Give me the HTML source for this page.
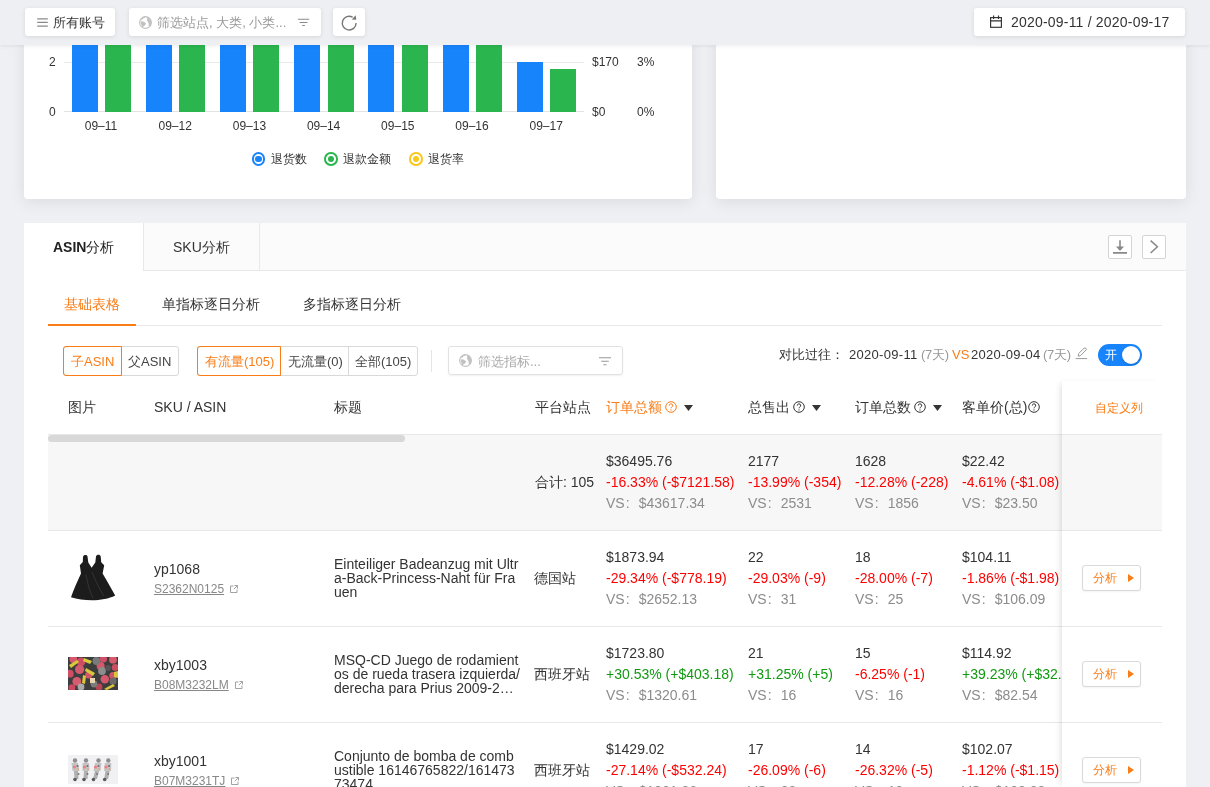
<!DOCTYPE html>
<html><head><meta charset="utf-8"><style>
*{box-sizing:border-box;margin:0;padding:0}
html,body{width:1210px;height:787px;overflow:hidden}
body{background:#eff0f3;font-family:"Liberation Sans",sans-serif;color:#333;position:relative;font-size:14px}
.abs{position:absolute}
.card{position:absolute;background:#fff;border-radius:4px;box-shadow:0 3px 16px rgba(0,0,0,.085)}
.hdr{position:absolute;left:0;top:0;width:1210px;height:45px;background:#eeeff2;box-shadow:0 1px 4px rgba(0,0,0,.08);z-index:10}
.btn{position:absolute;background:#fff;border-radius:3px;box-shadow:0 1px 4px rgba(0,0,0,.1);font-size:13px;color:#333;height:28px;top:8px;white-space:nowrap}
.bar{position:absolute;width:26px}
.b{background:#1784fc}.g{background:#2bb54f}
.t{position:absolute;white-space:nowrap;line-height:16px}
</style></head><body>
<div style="position:absolute;left:0;top:0;width:1210px;height:787px;will-change:transform">
<div class="hdr">
<div class="btn" style="left:25px;width:90px;"><svg class="abs" style="left:0;top:0" width="30" height="29" viewBox="25 8 30 29"><path d="M37.2 18.85H47.8M37.2 22.45H47.8M37.2 26.05H47.8" stroke="#8a8a8a" stroke-width="1.2"/></svg><span class="t" style="left:28px;top:6.6px">所有账号</span></div>
<div class="btn" style="left:129px;width:192px;color:#999"><svg class="abs" style="left:10px;top:8px" width="13" height="13" viewBox="0 0 13 13"><circle cx="6.5" cy="6.5" r="5.9" fill="none" stroke="#c2c2c2" stroke-width="1.1"/><path d="M1.6 5.3C3.3 4.8 5.8 5.6 7.2 7.6 6.5 9.5 4.8 10.6 3.2 11.2L2.6 9.2C1.8 8 1.5 6.5 1.6 5.3Z" fill="#c2c2c2"/><path d="M8.3 1C10.8 1.7 12.3 3.8 12.4 6.5 12.4 8.4 11.6 10 10.6 11L9.6 9.4C10 8 9.2 6.2 8.2 5.1 7.9 3.6 8.3 2.3 8.3 1Z" fill="#c2c2c2"/><path d="M2.4 3.6C3.2 2.2 4.5 1.2 6.2 0.9" fill="none" stroke="#c2c2c2" stroke-width="1.4"/></svg><span class="t" style="left:28px;top:6.6px">筛选站点, 大类, 小类...</span><svg class="abs" style="left:0;top:0" width="192" height="29" viewBox="129 8 192 29"><path d="M297.9 19.2H309.2M299.6 22.5H307.5M302.2 25.5H304.9" stroke="#8a8a8a" stroke-width="1.1"/></svg></div>
<div class="btn" style="left:333px;width:32px;"><svg class="abs" style="left:0;top:0" width="32" height="29" viewBox="333 8 32 29"><path d="M352.6 17.1A6.9 6.9 0 1 0 356.1 23.1" fill="none" stroke="#777" stroke-width="1.4"/><path d="M351.8 19.6L356.3 19.8 355.6 15.2Z" fill="#777"/></svg></div>
<div class="btn" style="left:974px;width:211px;font-size:14px"><svg class="abs" style="left:0;top:0" width="40" height="29" viewBox="974 8 40 29"><rect x="990.6" y="17.6" width="10.8" height="9.7" fill="none" stroke="#333" stroke-width="1.15"/><path d="M990.6 20.8H1001.4M993.6 15.5V18.9M998.5 15.5V18.9" stroke="#333" stroke-width="1.15"/></svg><span class="t" style="left:37px;top:5.6px;letter-spacing:.2px">2020-09-11 / 2020-09-17</span></div>
</div>
<div class="card" style="left:24px;top:20px;width:668px;height:179px"></div>
<div class="card" style="left:716px;top:20px;width:470px;height:179px"></div>
<div class="abs" style="left:64px;top:62px;width:520px;height:1px;background:#e9e9e9"></div>
<div class="abs" style="left:64px;top:111px;width:520px;height:1px;background:#e3e3e3"></div>
<div class="t" style="left:49px;top:54px;font-size:12px;color:#333">2</div>
<div class="t" style="left:49px;top:104px;font-size:12px;color:#333">0</div>
<div class="t" style="left:592px;top:54px;font-size:12px;color:#333">$170</div>
<div class="t" style="left:637px;top:54px;font-size:12px;color:#333">3%</div>
<div class="t" style="left:592px;top:104px;font-size:12px;color:#333">$0</div>
<div class="t" style="left:637px;top:104px;font-size:12px;color:#333">0%</div>
<div class="bar b" style="left:71.5px;top:40px;height:72px"></div>
<div class="bar g" style="left:105.0px;top:40px;height:72px"></div>
<div class="bar b" style="left:145.7px;top:40px;height:72px"></div>
<div class="bar g" style="left:179.2px;top:40px;height:72px"></div>
<div class="bar b" style="left:219.9px;top:40px;height:72px"></div>
<div class="bar g" style="left:253.4px;top:40px;height:72px"></div>
<div class="bar b" style="left:294.1px;top:40px;height:72px"></div>
<div class="bar g" style="left:327.6px;top:40px;height:72px"></div>
<div class="bar b" style="left:368.3px;top:40px;height:72px"></div>
<div class="bar g" style="left:401.8px;top:40px;height:72px"></div>
<div class="bar b" style="left:442.5px;top:40px;height:72px"></div>
<div class="bar g" style="left:476.0px;top:40px;height:72px"></div>
<div class="bar b" style="left:516.7px;top:62px;height:50px"></div>
<div class="bar g" style="left:550.2px;top:69px;height:43px"></div>
<div class="t" style="left:81.0px;width:40px;text-align:center;top:118px;font-size:12px">09–11</div>
<div class="t" style="left:155.2px;width:40px;text-align:center;top:118px;font-size:12px">09–12</div>
<div class="t" style="left:229.4px;width:40px;text-align:center;top:118px;font-size:12px">09–13</div>
<div class="t" style="left:303.6px;width:40px;text-align:center;top:118px;font-size:12px">09–14</div>
<div class="t" style="left:377.8px;width:40px;text-align:center;top:118px;font-size:12px">09–15</div>
<div class="t" style="left:452.0px;width:40px;text-align:center;top:118px;font-size:12px">09–16</div>
<div class="t" style="left:526.2px;width:40px;text-align:center;top:118px;font-size:12px">09–17</div>
<div class="abs" style="left:251.5px;top:152.3px;width:13.6px;height:13.6px;border-radius:50%;border:2px solid #1784fc;background:#fff"><div class="abs" style="left:1.5px;top:1.5px;width:6.6px;height:6.6px;border-radius:50%;background:#1784fc"></div></div><div class="t" style="left:270.5px;top:151px;font-size:12px">退货数</div>
<div class="abs" style="left:324.3px;top:152.3px;width:13.6px;height:13.6px;border-radius:50%;border:2px solid #2bb54f;background:#fff"><div class="abs" style="left:1.5px;top:1.5px;width:6.6px;height:6.6px;border-radius:50%;background:#2bb54f"></div></div><div class="t" style="left:343.3px;top:151px;font-size:12px">退款金额</div>
<div class="abs" style="left:409.4px;top:152.3px;width:13.6px;height:13.6px;border-radius:50%;border:2px solid #f9c81c;background:#fff"><div class="abs" style="left:1.5px;top:1.5px;width:6.6px;height:6.6px;border-radius:50%;background:#f9c81c"></div></div><div class="t" style="left:428.4px;top:151px;font-size:12px">退货率</div>
<div class="abs" style="left:24px;top:223px;width:1162px;height:600px;background:#fff"></div>

<div class="abs" style="left:24px;top:223px;width:1162px;height:48px;background:#fbfbfb;border-bottom:1px solid #e8e8e8"></div>
<div class="abs" style="left:24px;top:223px;width:120px;height:48px;background:#fff;border-right:1px solid #e8e8e8"></div>
<div class="abs" style="left:144px;top:223px;width:116px;height:47px;border-right:1px solid #e8e8e8"></div>
<div class="t" style="left:53px;top:239px;font-size:14px;color:#222"><b>ASIN</b><span style="font-weight:500">分析</span></div>
<div class="t" style="left:173px;top:239px;font-size:14px;color:#333">SKU分析</div>
<div class="abs" style="left:1108px;top:235px;width:24px;height:24px;border:1px solid #d4d4d4;border-radius:2px;background:#fff"></div>
<div class="abs" style="left:1142px;top:235px;width:24px;height:24px;border:1px solid #d4d4d4;border-radius:2px;background:#fff"></div>
<svg class="abs" style="left:1108px;top:235px" width="60" height="24" viewBox="1108 235 60 24"><path d="M1120 240.2V248M1113 252.9H1127" stroke="#888" stroke-width="1.6" fill="none"/><path d="M1116 246.5H1124L1120 251Z" fill="#888"/><path d="M1150.6 240.6L1157.4 246.8 1150.6 253" stroke="#888" stroke-width="1.5" fill="none"/></svg>
<div class="abs" style="left:48px;top:325px;width:1114px;height:1px;background:#e8e8e8"></div>
<div class="abs" style="left:48px;top:324px;width:88px;height:2px;background:#fa7d18"></div>
<div class="t" style="left:64px;top:296px;font-size:14px;color:#fa7d18">基础表格</div>
<div class="t" style="left:162px;top:296px;font-size:14px;color:#333">单指标逐日分析</div>
<div class="t" style="left:303px;top:296px;font-size:14px;color:#333">多指标逐日分析</div>

<div class="abs" style="left:63px;top:346px;width:116px;height:30px;border:1px solid #d9d9d9;border-radius:3px"></div>
<div class="abs" style="left:63px;top:346px;width:59px;height:30px;border:1px solid #fa7d18;border-radius:3px 0 0 3px"></div>
<div class="t" style="left:71px;top:354px;font-size:13px;color:#fa7d18">子ASIN</div>
<div class="t" style="left:128px;top:354px;font-size:13px;color:#444">父ASIN</div>

<div class="abs" style="left:197px;top:346px;width:221px;height:30px;border:1px solid #d9d9d9;border-radius:3px"></div>
<div class="abs" style="left:348px;top:346px;width:1px;height:30px;background:#d9d9d9"></div>
<div class="abs" style="left:197px;top:346px;width:84px;height:30px;border:1px solid #fa7d18;border-radius:3px 0 0 3px"></div>
<div class="t" style="left:205px;top:354px;font-size:13px;color:#fa7d18">有流量(105)</div>
<div class="t" style="left:288px;top:354px;font-size:13px;color:#444">无流量(0)</div>
<div class="t" style="left:355px;top:354px;font-size:13px;color:#444">全部(105)</div>
<div class="abs" style="left:431px;top:350px;width:1px;height:22px;background:#e5e5e5"></div>

<div class="abs" style="left:448px;top:346px;width:175px;height:29px;border:1px solid #e2e2e2;border-radius:3px;box-shadow:0 1px 2px rgba(0,0,0,.06)"></div>
<svg class="abs" style="left:459px;top:354px" width="13" height="13" viewBox="0 0 13 13"><circle cx="6.5" cy="6.5" r="5.9" fill="none" stroke="#c2c2c2" stroke-width="1.1"/><path d="M1.6 5.3C3.3 4.8 5.8 5.6 7.2 7.6 6.5 9.5 4.8 10.6 3.2 11.2L2.6 9.2C1.8 8 1.5 6.5 1.6 5.3Z" fill="#c2c2c2"/><path d="M8.3 1C10.8 1.7 12.3 3.8 12.4 6.5 12.4 8.4 11.6 10 10.6 11L9.6 9.4C10 8 9.2 6.2 8.2 5.1 7.9 3.6 8.3 2.3 8.3 1Z" fill="#c2c2c2"/><path d="M2.4 3.6C3.2 2.2 4.5 1.2 6.2 0.9" fill="none" stroke="#c2c2c2" stroke-width="1.4"/></svg>
<div class="t" style="left:478px;top:354px;font-size:13px;color:#aaa">筛选指标...</div>
<svg class="abs" style="left:599px;top:357px" width="12" height="9" viewBox="0 0 12 9"><path d="M0 .8h12M2.2 4.3h7.6M4.4 7.8h3.2" stroke="#999" stroke-width="1.1"/></svg>

<div class="t" style="left:779px;top:347px;font-size:13px;color:#333">对比过往：</div>
<div class="t" style="left:849px;top:347px;font-size:13px;color:#333;letter-spacing:.3px">2020-09-11</div>
<div class="t" style="left:921px;top:347px;font-size:13px;color:#999;letter-spacing:-.3px">(7天)</div>
<div class="t" style="left:952px;top:347px;font-size:13px;color:#fa7d18">VS</div>
<div class="t" style="left:971px;top:347px;font-size:13px;color:#333;letter-spacing:.3px">2020-09-04</div>
<div class="t" style="left:1043px;top:347px;font-size:13px;color:#999;letter-spacing:-.3px">(7天)</div>
<svg class="abs" style="left:1070px;top:340px" width="20" height="22" viewBox="1070 340 20 22"><path d="M1078.3 356.2L1078.6 353.6 1084 348.3Q1085 347.5 1085.9 348.4 1086.7 349.3 1085.9 350.1L1080.6 355.6Z" fill="none" stroke="#999" stroke-width="1"/><path d="M1075.7 358.6H1087.2" stroke="#999" stroke-width="1"/></svg>
<div class="abs" style="left:1098px;top:344px;width:44px;height:22px;border-radius:11px;background:#1784fc"></div>
<div class="abs" style="left:1122px;top:346px;width:18px;height:18px;border-radius:50%;background:#fff;box-shadow:0 1px 2px rgba(0,0,0,.2)"></div>
<div class="t" style="left:1105px;top:347px;font-size:12px;color:#fff">开</div>

<div class="abs" style="left:48px;top:434px;width:1114px;height:1px;background:#e8e8e8"></div>
<div class="abs" style="left:48px;top:435px;width:1114px;height:95px;background:#f7f7f7"></div>
<div class="abs" style="left:48px;top:530px;width:1114px;height:1px;background:#e8e8e8"></div>
<div class="abs" style="left:48px;top:626px;width:1114px;height:1px;background:#e8e8e8"></div>
<div class="abs" style="left:48px;top:722px;width:1114px;height:1px;background:#e8e8e8"></div>
<div class="abs" style="left:48px;top:435px;width:357px;height:7px;border-radius:3.5px;background:#d8d8d8"></div>

<div class="t" style="left:68px;top:399px">图片</div>
<div class="t" style="left:154px;top:399px">SKU / ASIN</div>
<div class="t" style="left:334px;top:399px">标题</div>
<div class="t" style="left:535px;top:399px">平台站点</div>
<div class="t" style="left:606px;top:399px;color:#fa7d18">订单总额</div>
<div class="t" style="left:748px;top:399px">总售出</div>
<div class="t" style="left:855px;top:399px">订单总数</div>
<div class="t" style="left:962px;top:399px">客单价(总)</div>

<svg class="abs" style="left:665px;top:401px" width="12" height="12" viewBox="0 0 12 12"><circle cx="6" cy="6" r="5.3" fill="none" stroke="#fa7d18" stroke-width="1"/><path d="M4.3 4.6a1.7 1.7 0 1 1 2.4 1.5c-.5.3-.7.6-.7 1.2" fill="none" stroke="#fa7d18" stroke-width="1"/><circle cx="6" cy="8.9" r=".6" fill="#fa7d18"/></svg><svg class="abs" style="left:684px;top:405px" width="9" height="6" viewBox="0 0 9 6"><path d="M0 0h9L4.5 6z" fill="#333"/></svg>
<svg class="abs" style="left:793px;top:401px" width="12" height="12" viewBox="0 0 12 12"><circle cx="6" cy="6" r="5.3" fill="none" stroke="#333" stroke-width="1"/><path d="M4.3 4.6a1.7 1.7 0 1 1 2.4 1.5c-.5.3-.7.6-.7 1.2" fill="none" stroke="#333" stroke-width="1"/><circle cx="6" cy="8.9" r=".6" fill="#333"/></svg><svg class="abs" style="left:812px;top:405px" width="9" height="6" viewBox="0 0 9 6"><path d="M0 0h9L4.5 6z" fill="#333"/></svg>
<svg class="abs" style="left:914px;top:401px" width="12" height="12" viewBox="0 0 12 12"><circle cx="6" cy="6" r="5.3" fill="none" stroke="#333" stroke-width="1"/><path d="M4.3 4.6a1.7 1.7 0 1 1 2.4 1.5c-.5.3-.7.6-.7 1.2" fill="none" stroke="#333" stroke-width="1"/><circle cx="6" cy="8.9" r=".6" fill="#333"/></svg><svg class="abs" style="left:933px;top:405px" width="9" height="6" viewBox="0 0 9 6"><path d="M0 0h9L4.5 6z" fill="#333"/></svg>
<svg class="abs" style="left:1028px;top:401px" width="12" height="12" viewBox="0 0 12 12"><circle cx="6" cy="6" r="5.3" fill="none" stroke="#333" stroke-width="1"/><path d="M4.3 4.6a1.7 1.7 0 1 1 2.4 1.5c-.5.3-.7.6-.7 1.2" fill="none" stroke="#333" stroke-width="1"/><circle cx="6" cy="8.9" r=".6" fill="#333"/></svg>
<div class="t" style="left:535px;top:474px">合计: 105</div>
<div class="t" style="left:606px;top:450.5px;line-height:21px"><div style="color:#333">$36495.76</div><div style="color:#ff0000">-16.33% (-$7121.58)</div><div style="color:#8c8c8c">VS<span style=display:inline-block;width:14px;padding-left:1px>:</span>$43617.34</div></div>
<div class="t" style="left:748px;top:450.5px;line-height:21px"><div style="color:#333">2177</div><div style="color:#ff0000">-13.99% (-354)</div><div style="color:#8c8c8c">VS<span style=display:inline-block;width:14px;padding-left:1px>:</span>2531</div></div>
<div class="t" style="left:855px;top:450.5px;line-height:21px"><div style="color:#333">1628</div><div style="color:#ff0000">-12.28% (-228)</div><div style="color:#8c8c8c">VS<span style=display:inline-block;width:14px;padding-left:1px>:</span>1856</div></div>
<div class="t" style="left:962px;top:450.5px;line-height:21px"><div style="color:#333">$22.42</div><div style="color:#ff0000">-4.61% (-$1.08)</div><div style="color:#8c8c8c">VS<span style=display:inline-block;width:14px;padding-left:1px>:</span>$23.50</div></div>
<svg class="abs" style="left:66px;top:550px" width="56" height="56" viewBox="66 550 56 56"><path d="M83 557C83.5 554.5 87 554.5 87.5 556.5L88.3 562.5 91.6 567.8 95.3 562.5 96 556.5C96.5 554.3 100.3 554.3 100.7 556.5L101.2 562.3 104.2 565.3 102.6 573.5C107 581 111 588 115.2 595.5 104 601.5 84 601.5 71 597.2 74 589 77.5 581 81 573.5L79.8 565.3 82.8 562Z" fill="#1c1c1c"/><path d="M86 575C88 585 90 592 93 598M92 572C96 582 100 590 104 596" stroke="#3a3a3a" stroke-width=".8" fill="none"/></svg>
<div class="t" style="left:154px;top:561px">yp1068</div>
<div class="t" style="left:154px;top:581px;font-size:12px;color:#888"><span style="text-decoration:underline">S2362N0125</span><svg style="display:inline-block;margin-left:6px;vertical-align:0px" width="8" height="8" viewBox="0 0 8 8"><path d="M3.5 1H.5v6.5H7V4.5M4.5.5h3v3M7.3.7L3.8 4.2" fill="none" stroke="#999" stroke-width=".9"/></svg></div>
<div class="t" style="left:334px;top:557px;line-height:14px">Einteiliger Badeanzug mit Ultr<br>a-Back-Princess-Naht für Fra<br>uen</div>
<div class="t" style="left:534px;top:570px">德国站</div>
<div class="t" style="left:606px;top:546.5px;line-height:21px"><div style="color:#333">$1873.94</div><div style="color:#ff0000">-29.34% (-$778.19)</div><div style="color:#8c8c8c">VS<span style=display:inline-block;width:14px;padding-left:1px>:</span>$2652.13</div></div>
<div class="t" style="left:748px;top:546.5px;line-height:21px"><div style="color:#333">22</div><div style="color:#ff0000">-29.03% (-9)</div><div style="color:#8c8c8c">VS<span style=display:inline-block;width:14px;padding-left:1px>:</span>31</div></div>
<div class="t" style="left:855px;top:546.5px;line-height:21px"><div style="color:#333">18</div><div style="color:#ff0000">-28.00% (-7)</div><div style="color:#8c8c8c">VS<span style=display:inline-block;width:14px;padding-left:1px>:</span>25</div></div>
<div class="t" style="left:962px;top:546.5px;line-height:21px"><div style="color:#333">$104.11</div><div style="color:#ff0000">-1.86% (-$1.98)</div><div style="color:#8c8c8c">VS<span style=display:inline-block;width:14px;padding-left:1px>:</span>$106.09</div></div>
<svg class="abs" style="left:68px;top:657px" width="50" height="33" viewBox="68 657 50 33"><defs><filter id="bl1"><feGaussianBlur stdDeviation=".35"/></filter></defs><rect x="68" y="657" width="50" height="33" fill="#3d3d3d"/><g filter="url(#bl1)"><circle cx="73.3" cy="659" r="3.9" fill="#d5586c"/><circle cx="81" cy="661.8" r="4.4" fill="#cf4d63"/><circle cx="79.6" cy="669.5" r="4.6000000000000005" fill="#d65a6d"/><circle cx="69.8" cy="673.7" r="3.9" fill="#cd4f63"/><circle cx="76.8" cy="681.4" r="4.4" fill="#d65d70"/><circle cx="71.9" cy="687.7" r="3.4" fill="#cc4a5f"/><circle cx="88.7" cy="675" r="3.6" fill="#d2566a"/><circle cx="100.6" cy="666" r="4.0" fill="#d6596d"/><circle cx="103.4" cy="659" r="3.6" fill="#cf5066"/><circle cx="113" cy="659.7" r="3.9" fill="#d45a6c"/><circle cx="115.2" cy="667.4" r="3.4" fill="#cc4d62"/><circle cx="113" cy="675.8" r="3.6999999999999997" fill="#d2566a"/><circle cx="104.8" cy="679.3" r="4.2" fill="#d7596d"/><circle cx="99" cy="687" r="3.4" fill="#b84456"/><circle cx="96.4" cy="661" r="3.9" fill="#7a7a7a"/><circle cx="102" cy="671" r="3.9" fill="#8d8d8d"/><circle cx="81" cy="687" r="3.4" fill="#aaa"/><circle cx="113" cy="681" r="3.6" fill="#6a6a6a"/><circle cx="94" cy="684" r="3.4" fill="#7c7c7c"/><circle cx="108" cy="668" r="2.9" fill="#555"/><path d="M69 665L77 660 79 662 71 668Z M84 658L92 661 90 664 83 661Z M86 668L95 673 93 676 85 671Z M83 675L86 676 85 684 82 683Z M104 689L113 684 115 686 107 690Z M114 672L118 671 118 678 114 677Z" fill="#d9c83c"/><rect x="90" y="678" width="5" height="5" fill="#ead6ae"/></g></svg>
<div class="t" style="left:154px;top:657px">xby1003</div>
<div class="t" style="left:154px;top:677px;font-size:12px;color:#888"><span style="text-decoration:underline">B08M3232LM</span><svg style="display:inline-block;margin-left:6px;vertical-align:0px" width="8" height="8" viewBox="0 0 8 8"><path d="M3.5 1H.5v6.5H7V4.5M4.5.5h3v3M7.3.7L3.8 4.2" fill="none" stroke="#999" stroke-width=".9"/></svg></div>
<div class="t" style="left:334px;top:653px;line-height:14px">MSQ-CD Juego de rodamient<br>os de rueda trasera izquierda/<br>derecha para Prius 2009-2…</div>
<div class="t" style="left:534px;top:666px">西班牙站</div>
<div class="t" style="left:606px;top:642.5px;line-height:21px"><div style="color:#333">$1723.80</div><div style="color:#119a11">+30.53% (+$403.18)</div><div style="color:#8c8c8c">VS<span style=display:inline-block;width:14px;padding-left:1px>:</span>$1320.61</div></div>
<div class="t" style="left:748px;top:642.5px;line-height:21px"><div style="color:#333">21</div><div style="color:#119a11">+31.25% (+5)</div><div style="color:#8c8c8c">VS<span style=display:inline-block;width:14px;padding-left:1px>:</span>16</div></div>
<div class="t" style="left:855px;top:642.5px;line-height:21px"><div style="color:#333">15</div><div style="color:#ff0000">-6.25% (-1)</div><div style="color:#8c8c8c">VS<span style=display:inline-block;width:14px;padding-left:1px>:</span>16</div></div>
<div class="t" style="left:962px;top:642.5px;line-height:21px"><div style="color:#333">$114.92</div><div style="color:#119a11">+39.23% (+$32.38)</div><div style="color:#8c8c8c">VS<span style=display:inline-block;width:14px;padding-left:1px>:</span>$82.54</div></div>
<svg class="abs" style="left:68px;top:755px" width="50" height="29" viewBox="68 755 50 29"><defs><filter id="bl2"><feGaussianBlur stdDeviation=".55"/></filter></defs><rect x="68" y="755" width="50" height="29" fill="#f1f1f3"/><g filter="url(#bl2)"><ellipse cx="75" cy="760.5" rx="2.2" ry="2.2" fill="#8f8f8f"/><path d="M71.5 763L78 763 79.5 771 72.5 771Z" fill="#c4c4c4"/><circle cx="74.5" cy="767" r="1.6" fill="#ec7d8c"/><circle cx="77.5" cy="766" r="1.1" fill="#6f6f6f"/><circle cx="78" cy="769" r=".9" fill="#e9a86a"/><path d="M74 771L78 771 78.5 779 74.5 779Z" fill="#b0b0b0"/><circle cx="75" cy="779.5" r="1.8" fill="#5a5a5a"/><circle cx="78.5" cy="774" r="1" fill="#777"/><ellipse cx="86" cy="760.5" rx="2.2" ry="2.2" fill="#8f8f8f"/><path d="M82.5 763L89 763 89.5 771 82.5 771Z" fill="#c4c4c4"/><circle cx="84.5" cy="767" r="1.6" fill="#ec7d8c"/><circle cx="87.5" cy="766" r="1.1" fill="#6f6f6f"/><circle cx="88" cy="769" r=".9" fill="#e9a86a"/><path d="M84 771L88 771 87.5 779 83.5 779Z" fill="#b0b0b0"/><circle cx="84" cy="779.5" r="1.8" fill="#5a5a5a"/><circle cx="87.5" cy="774" r="1" fill="#777"/><ellipse cx="98.5" cy="760.5" rx="2.2" ry="2.2" fill="#8f8f8f"/><path d="M95.0 763L101.5 763 100.5 771 93.5 771Z" fill="#c4c4c4"/><circle cx="95.5" cy="767" r="1.6" fill="#ec7d8c"/><circle cx="98.5" cy="766" r="1.1" fill="#6f6f6f"/><circle cx="99" cy="769" r=".9" fill="#e9a86a"/><path d="M95 771L99 771 97.0 779 93.0 779Z" fill="#b0b0b0"/><circle cx="93.5" cy="779.5" r="1.8" fill="#5a5a5a"/><circle cx="97.0" cy="774" r="1" fill="#777"/><ellipse cx="108.3" cy="760.5" rx="2.2" ry="2.2" fill="#8f8f8f"/><path d="M104.8 763L111.3 763 111.0 771 104.0 771Z" fill="#c4c4c4"/><circle cx="106.0" cy="767" r="1.6" fill="#ec7d8c"/><circle cx="109.0" cy="766" r="1.1" fill="#6f6f6f"/><circle cx="109.5" cy="769" r=".9" fill="#e9a86a"/><path d="M105.5 771L109.5 771 108.2 779 104.2 779Z" fill="#b0b0b0"/><circle cx="104.7" cy="779.5" r="1.8" fill="#5a5a5a"/><circle cx="108.2" cy="774" r="1" fill="#777"/></g></svg>
<div class="t" style="left:154px;top:753px">xby1001</div>
<div class="t" style="left:154px;top:773px;font-size:12px;color:#888"><span style="text-decoration:underline">B07M3231TJ</span><svg style="display:inline-block;margin-left:6px;vertical-align:0px" width="8" height="8" viewBox="0 0 8 8"><path d="M3.5 1H.5v6.5H7V4.5M4.5.5h3v3M7.3.7L3.8 4.2" fill="none" stroke="#999" stroke-width=".9"/></svg></div>
<div class="t" style="left:334px;top:749px;line-height:14px">Conjunto de bomba de comb<br>ustible 16146765822/161473<br>73474</div>
<div class="t" style="left:534px;top:762px">西班牙站</div>
<div class="t" style="left:606px;top:738.5px;line-height:21px"><div style="color:#333">$1429.02</div><div style="color:#ff0000">-27.14% (-$532.24)</div><div style="color:#8c8c8c">VS<span style=display:inline-block;width:14px;padding-left:1px>:</span>$1961.26</div></div>
<div class="t" style="left:748px;top:738.5px;line-height:21px"><div style="color:#333">17</div><div style="color:#ff0000">-26.09% (-6)</div><div style="color:#8c8c8c">VS<span style=display:inline-block;width:14px;padding-left:1px>:</span>23</div></div>
<div class="t" style="left:855px;top:738.5px;line-height:21px"><div style="color:#333">14</div><div style="color:#ff0000">-26.32% (-5)</div><div style="color:#8c8c8c">VS<span style=display:inline-block;width:14px;padding-left:1px>:</span>19</div></div>
<div class="t" style="left:962px;top:738.5px;line-height:21px"><div style="color:#333">$102.07</div><div style="color:#ff0000">-1.12% (-$1.15)</div><div style="color:#8c8c8c">VS<span style=display:inline-block;width:14px;padding-left:1px>:</span>$103.22</div></div>
<div class="abs" style="left:1062px;top:381px;width:100px;height:406px;background:#fff;box-shadow:-4px 0 6px -3px rgba(0,0,0,.14)"></div>
<div class="abs" style="left:1062px;top:434px;width:100px;height:1px;background:#e8e8e8"></div>
<div class="abs" style="left:1062px;top:435px;width:100px;height:95px;background:#f7f7f7"></div>
<div class="abs" style="left:1062px;top:530px;width:100px;height:1px;background:#e8e8e8"></div>
<div class="abs" style="left:1062px;top:626px;width:100px;height:1px;background:#e8e8e8"></div>
<div class="abs" style="left:1062px;top:722px;width:100px;height:1px;background:#e8e8e8"></div>
<div class="t" style="left:1095px;top:400px;font-size:12px;color:#fa7d18">自定义列</div>
<div class="abs" style="left:1082px;top:565px;width:59px;height:26px;border:1px solid #d9d9d9;border-radius:3px;background:#fff;box-shadow:0 1px 2px rgba(0,0,0,.05)"></div>
<div class="t" style="left:1093px;top:570px;font-size:12px;color:#fa7d18">分析</div>
<svg class="abs" style="left:1128px;top:574px" width="6" height="8" viewBox="0 0 6 8"><path d="M0 0l6 4-6 4z" fill="#fa7d18"/></svg>
<div class="abs" style="left:1082px;top:661px;width:59px;height:26px;border:1px solid #d9d9d9;border-radius:3px;background:#fff;box-shadow:0 1px 2px rgba(0,0,0,.05)"></div>
<div class="t" style="left:1093px;top:666px;font-size:12px;color:#fa7d18">分析</div>
<svg class="abs" style="left:1128px;top:670px" width="6" height="8" viewBox="0 0 6 8"><path d="M0 0l6 4-6 4z" fill="#fa7d18"/></svg>
<div class="abs" style="left:1082px;top:757px;width:59px;height:26px;border:1px solid #d9d9d9;border-radius:3px;background:#fff;box-shadow:0 1px 2px rgba(0,0,0,.05)"></div>
<div class="t" style="left:1093px;top:762px;font-size:12px;color:#fa7d18">分析</div>
<svg class="abs" style="left:1128px;top:766px" width="6" height="8" viewBox="0 0 6 8"><path d="M0 0l6 4-6 4z" fill="#fa7d18"/></svg>
</div></body></html>
